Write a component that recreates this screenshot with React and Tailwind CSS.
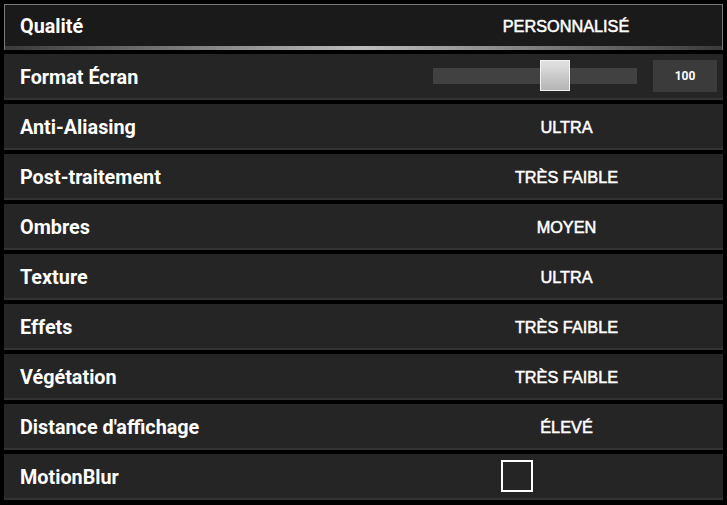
import { useState } from "react";

const rows = [
  { label: "Anti-Aliasing", value: "ULTRA" },
  { label: "Post-traitement", value: "TRÈS FAIBLE" },
  { label: "Ombres", value: "MOYEN" },
  { label: "Texture", value: "ULTRA" },
  { label: "Effets", value: "TRÈS FAIBLE" },
  { label: "Végétation", value: "TRÈS FAIBLE" },
  { label: "Distance d'affichage", value: "ÉLEVÉ" },
];

function Row({ label, children }) {
  return (
    <div className="flex flex-col h-[46px] bg-[#252525]">
      <div className="flex flex-1 items-center">
        <div className="w-[406px] pl-4 pt-[3px] text-[19.8px] font-bold text-white">{label}</div>
        <div className="flex flex-1 items-center justify-center">{children}</div>
      </div>
      <div className="h-[2px] bg-[#333333]" />
    </div>
  );
}

export default function App() {
  const [scale] = useState(100);
  const [blur, setBlur] = useState(false);

  return (
    <div className="w-[727px] h-[505px] bg-black px-1 pt-1 flex flex-col gap-1 font-['Roboto',sans-serif]">
      <div className="flex flex-col h-[46px] bg-[#1a1a1a] border border-[#7a7a7a] border-b-0">
        <div className="flex flex-1 items-center">
          <div className="w-[405px] pl-[15px] pt-[3px] text-[19.8px] font-bold text-white">Qualité</div>
          <div className="flex flex-1 items-center justify-center pt-[2px] text-[16.3px] font-['Liberation_Sans',sans-serif] text-white [-webkit-text-stroke:0.5px_white]">
            PERSONNALISÉ
          </div>
        </div>
        <div className="h-[4px] bg-[linear-gradient(to_right,#3a3a3a,#bdbdbd_50%,#3a3a3a)]" />
      </div>

      <div className="flex flex-col h-[46px] bg-[#252525]">
        <div className="flex flex-1 items-center">
          <div className="w-[406px] pl-4 pt-[3px] text-[19.8px] font-bold text-white">Format Écran</div>
          <div className="flex flex-1 items-center pl-[23px]">
            <div className="relative w-[204px] h-[16px] bg-[#414141]">
              <div className="absolute left-[107px] top-[-8px] w-[30px] h-[31px] border border-[#f2f2f2] bg-[linear-gradient(to_bottom,#e2e2e2,#b5b5b5)]" />
            </div>
            <div className="ml-4 w-[64px] h-[32px] bg-[#3b3b3b] flex items-center justify-center text-[12px] font-bold text-white">
              {scale}
            </div>
          </div>
        </div>
        <div className="h-[2px] bg-[#333333]" />
      </div>

      {rows.map((r) => (
        <Row key={r.label} label={r.label}>
          <span className="pt-[2px] text-[16.3px] font-['Liberation_Sans',sans-serif] text-white [-webkit-text-stroke:0.5px_white]">
            {r.value}
          </span>
        </Row>
      ))}

      <Row label="MotionBlur">
        <button
          onClick={() => setBlur(!blur)}
          className="w-[32px] h-[32px] border-2 border-white mr-[100px]"
        />
      </Row>
    </div>
  );
}
